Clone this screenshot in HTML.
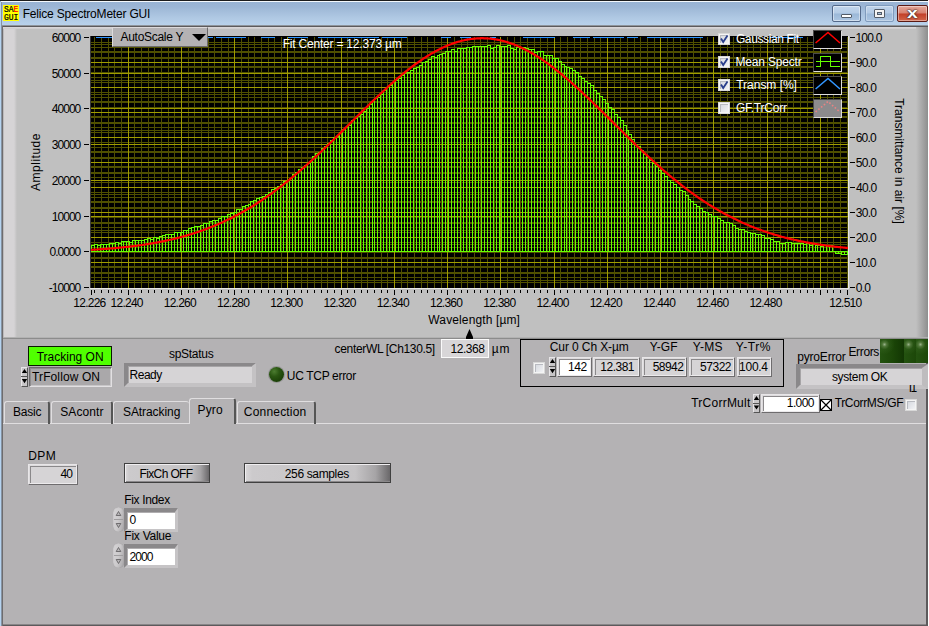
<!DOCTYPE html>
<html><head><meta charset="utf-8"><title>Felice SpectroMeter GUI</title>
<style>
html,body{margin:0;padding:0}
body{width:929px;height:626px;position:relative;overflow:hidden;background:#fff;font-family:"Liberation Sans",sans-serif;font-size:12px;color:#000}
.a{position:absolute}
.t{position:absolute;white-space:nowrap;line-height:14px;height:14px}
.w{color:#fff}
.r{text-align:right}
.c{text-align:center}
#title{left:0;top:0;width:928px;height:27px;background:linear-gradient(#97b2d3 0,#9cb6d5 25%,#afc8e3 65%,#bbd4ed 100%)}
#panel{left:3px;top:27px;width:923px;height:597px;background:#b4b2b4;border-bottom:1px solid #888688}
#graph{left:3px;top:27px;width:925px;height:312px;background:#c0c0c0}
.sunk{position:absolute;box-sizing:border-box;border:1px solid;border-color:#6e6c6e #e6e4e6 #e6e4e6 #6e6c6e;background:#d6d4d6}
.fld{position:absolute;box-sizing:border-box;border:1px solid;border-color:#e8e6e8 #6e6c6e #6e6c6e #e8e6e8;background:#d6d4d6;box-shadow:inset 1px 1px 0 #dddbdd,inset -1px -1px 0 #eceaec,inset 2px 2px 0 #8a888a}
.btn{position:absolute;box-sizing:border-box;border:1px solid;border-color:#e8e6e8 #4a484a #4a484a #e8e6e8;background:#c2c0c2;text-align:center;line-height:17px}
.cb{position:absolute;box-sizing:border-box;width:12px;height:12px;border:1px solid #d8d8d8;background:linear-gradient(135deg,#d0d3da,#f4f5f7);box-shadow:inset 0 0 0 1px #f4f4f4,inset 1px 1px 0 1px #b8bac0}
.tab{position:absolute;box-sizing:border-box;top:401px;height:23px;border-top:1px solid #e0dee0;border-left:1px solid #e0dee0;border-right:2px solid #555;border-radius:3px 3px 0 0;text-align:center;line-height:21px}
</style></head><body>
<!-- window chrome -->
<div class="a" id="title"></div>
<div class="a" style="left:0;top:0;width:929px;height:1px;background:#1c1c1c"></div>
<div class="a" style="left:1px;top:1px;width:927px;height:1px;background:#f4f8fc"></div>
<div class="a" style="left:0;top:2px;width:2px;height:624px;background:linear-gradient(90deg,#b5d3f0 0,#b5d3f0 1px,#8793a2 1px)"></div>
<div class="a" style="left:2px;top:25px;width:926px;height:601px;background:#5c5a5c"></div>
<div class="a" style="left:2px;top:25px;width:1px;height:601px;background:#6e6c6e"></div>
<div class="a" style="left:2px;top:25px;width:926px;height:1px;background:#8f959c"></div>
<div class="a" id="panel"></div>
<div class="a" style="left:928px;top:0;width:1px;height:626px;background:#fff"></div>
<!-- icon -->
<div class="a" style="left:3px;top:5px;width:16px;height:16px;background:#ff0"></div>
<div class="t" style="left:4px;top:5px;font:8px/8px 'Liberation Mono',monospace;height:8px;transform-origin:0 0;transform:scaleY(1.22);-webkit-text-stroke:.2px #000">SA<span style="color:#f00;-webkit-text-stroke:.2px #f00">E</span></div>
<div class="t" style="left:4px;top:13px;font:8px/8px 'Liberation Mono',monospace;height:8px;transform-origin:0 0;transform:scaleY(1.22);-webkit-text-stroke:.2px #000">GUI</div>
<div class="t" style="left:22.74px;top:7.00px;font-size:12px;letter-spacing:-0.203px;">Felice SpectroMeter GUI</div>
<!-- window buttons -->
<div class="a" style="left:832px;top:5px;width:29px;height:17px;box-sizing:border-box;border:1px solid #53698a;border-radius:2px;background:linear-gradient(#c3d6ec 0,#b4cbe5 48%,#9bb8d8 52%,#adc6e2 100%);box-shadow:inset 0 0 0 1px rgba(255,255,255,.45)"></div>
<div class="a" style="left:841px;top:13.5px;width:11px;height:4.5px;box-sizing:border-box;border:1px solid #535c68;border-radius:1px;background:#fff"></div>
<div class="a" style="left:865px;top:5px;width:29px;height:17px;box-sizing:border-box;border:1px solid #7f9bbd;border-radius:2px;background:linear-gradient(#c0d4eb 0,#b2c9e4 48%,#9cb9d9 52%,#abc4e1 100%);box-shadow:inset 0 0 0 1px rgba(255,255,255,.3)"></div>
<div class="a" style="left:874px;top:9px;width:11px;height:9px;box-sizing:border-box;border:1px solid #535c68;border-radius:1px;background:#f4f4f4"></div>
<div class="a" style="left:877px;top:12px;width:5px;height:3px;box-sizing:border-box;border:1px solid #535c68;background:#a9c1dd"></div>
<div class="a" style="left:897px;top:5px;width:31px;height:17px;box-sizing:border-box;border:1px solid #5b1a14;border-radius:2px;background:linear-gradient(#e5a99b 0,#d7806f 48%,#c23f28 52%,#d2664b 100%);box-shadow:inset 0 0 0 1px rgba(255,255,255,.4)"></div>
<div class="t w" style="left:897px;top:5px;width:31px;text-align:center;font:bold 15.5px/16px 'Liberation Sans',sans-serif;height:17px;transform:scaleX(1.25);text-shadow:0 0 1px #3c2c28,0 0 1px #3c2c28,0 0 2px #3c2c28">x</div>

<!-- graph panel -->
<div class="a" id="graph"></div>
<div class="a" style="left:3px;top:27px;width:14px;height:310px;background:linear-gradient(90deg,#bcbabc 0,#bcbabc 1px,#d6d4d6 1.5px,#d6d4d6 11px,#c0c0c0 14px)"></div>
<div class="a" style="left:3px;top:27px;width:917px;height:2px;background:linear-gradient(#dcdadc,#cccacc)"></div>
<div class="a" style="left:916px;top:27px;width:12px;height:312px;background:linear-gradient(90deg,#c0c0c0,#8e8e8e)"></div>
<div class="a" style="left:3px;top:337px;width:925px;height:1px;background:#b2b2b2"></div>
<div class="a" style="left:3px;top:338px;width:925px;height:1px;background:#8c8c8c"></div>

<svg class="a" style="left:0;top:0" width="929" height="340" shape-rendering="crispEdges">
<rect x="91" y="36" width="757" height="252" fill="#000"/><path d="M91 42.5H848M91 44.5H848M91 47.5H848M91 51.5H848M91 52.5H848M91 57.5H848M91 58.5H848M91 66.5H848M91 67.5H848M91 72.5H848M91 77.5H848M91 80.5H848M91 82.5H848M91 92.5H848M91 94.5H848M91 97.5H848M91 101.5H848M91 102.5H848M91 107.5H848M91 116.5H848M91 117.5H848M91 122.5H848M91 123.5H848M91 127.5H848M91 130.5H848M91 132.5H848M91 142.5H848M91 147.5H848M91 151.5H848M91 152.5H848M91 157.5H848M91 158.5H848M91 166.5H848M91 167.5H848M91 172.5H848M91 173.5H848M91 177.5H848M91 182.5H848M91 192.5H848M91 194.5H848M91 197.5H848M91 201.5H848M91 202.5H848M91 207.5H848M91 208.5H848M91 217.5H848M91 222.5H848M91 223.5H848M91 227.5H848M91 230.5H848M91 232.5H848M91 242.5H848M91 244.5H848M91 247.5H848M91 252.5H848M91 257.5H848M91 258.5H848M91 266.5H848M91 267.5H848M91 272.5H848M91 273.5H848M91 277.5H848M91 280.5H848M91 282.5H848M94.5 37V288M101.5 37V288M108.5 37V288M114.5 37V288M121.5 37V288M134.5 37V288M141.5 37V288M148.5 37V288M154.5 37V288M161.5 37V288M168.5 37V288M174.5 37V288M188.5 37V288M194.5 37V288M201.5 37V288M208.5 37V288M214.5 37V288M221.5 37V288M228.5 37V288M241.5 37V288M248.5 37V288M254.5 37V288M261.5 37V288M268.5 37V288M274.5 37V288M281.5 37V288M294.5 37V288M301.5 37V288M307.5 37V288M314.5 37V288M321.5 37V288M327.5 37V288M334.5 37V288M347.5 37V288M354.5 37V288M361.5 37V288M367.5 37V288M374.5 37V288M381.5 37V288M387.5 37V288M401.5 37V288M407.5 37V288M414.5 37V288M421.5 37V288M427.5 37V288M434.5 37V288M441.5 37V288M454.5 37V288M461.5 37V288M467.5 37V288M474.5 37V288M480.5 37V288M487.5 37V288M494.5 37V288M507.5 37V288M514.5 37V288M520.5 37V288M527.5 37V288M534.5 37V288M540.5 37V288M547.5 37V288M560.5 37V288M567.5 37V288M574.5 37V288M580.5 37V288M587.5 37V288M594.5 37V288M600.5 37V288M614.5 37V288M620.5 37V288M627.5 37V288M634.5 37V288M640.5 37V288M647.5 37V288M654.5 37V288M667.5 37V288M673.5 37V288M680.5 37V288M687.5 37V288M693.5 37V288M700.5 37V288M707.5 37V288M720.5 37V288M727.5 37V288M733.5 37V288M740.5 37V288M747.5 37V288M753.5 37V288M760.5 37V288M773.5 37V288M780.5 37V288M787.5 37V288M793.5 37V288M800.5 37V288M807.5 37V288M813.5 37V288M827.5 37V288M833.5 37V288M840.5 37V288M847.5 37V288" stroke="#505000" stroke-width="1" fill="none"/><path d="M91 62.5H848M91 73.5H848M91 87.5H848M91 108.5H848M91 112.5H848M91 137.5H848M91 144.5H848M91 162.5H848M91 180.5H848M91 187.5H848M91 212.5H848M91 216.5H848M91 237.5H848M91 251.5H848M91 262.5H848M128.5 37V288M181.5 37V288M234.5 37V288M287.5 37V288M341.5 37V288M394.5 37V288M447.5 37V288M500.5 37V288M554.5 37V288M607.5 37V288M660.5 37V288M713.5 37V288M767.5 37V288M820.5 37V288" stroke="#a09c00" stroke-width="1" fill="none"/><path d="M91.5 245V252M91 245.5H95M94.5 245V252M94.5 244V252M94 244.5H98M97.5 244V252M97.5 245V252M97 245.5H101M100.5 245V252M100.5 244V252M100 244.5H104M103.5 244V252M103.5 244V252M103 244.5H107M106.5 244V252M106.5 244V252M106 244.5H110M109.5 244V252M109.5 243V252M109 243.5H113M112.5 243V252M112.5 243V252M112 243.5H116M115.5 243V252M115.5 242V252M115 242.5H119M118.5 242V252M118.5 243V252M118 243.5H122M121.5 243V252M121.5 241V252M121 241.5H124M123.5 241V252M123.5 241V252M123 241.5H127M126.5 241V252M126.5 241V252M126 241.5H130M129.5 241V252M129.5 242V252M129 242.5H133M132.5 242V252M132.5 240V252M132 240.5H136M135.5 240V252M135.5 240V252M135 240.5H139M138.5 240V252M138.5 240V252M138 240.5H142M141.5 240V252M141.5 240V252M141 240.5H145M144.5 240V252M144.5 239V252M144 239.5H148M147.5 239V252M147.5 238V252M147 238.5H151M150.5 238V252M150.5 239V252M150 239.5H154M153.5 239V252M153.5 237V252M153 237.5H157M156.5 237V252M156.5 238V252M156 238.5H160M159.5 238V252M159.5 236V252M159 236.5H163M162.5 236V252M162.5 235V252M162 235.5H166M165.5 235V252M165.5 234V252M165 234.5H169M168.5 234V252M168.5 234V252M168 234.5H172M171.5 234V252M171.5 234V252M171 234.5H175M174.5 234V252M174.5 232V252M174 232.5H178M177.5 232V252M177.5 232V252M177 232.5H181M180.5 232V252M180.5 232V252M180 232.5H184M183.5 232V252M183.5 230V252M183 230.5H187M186.5 230V252M186.5 230V252M186 230.5H189M188.5 230V252M188.5 228V252M188 228.5H192M191.5 228V252M191.5 227V252M191 227.5H195M194.5 227V252M194.5 226V252M194 226.5H198M197.5 226V252M197.5 226V252M197 226.5H201M200.5 226V252M200.5 225V252M200 225.5H204M203.5 225V252M203.5 223V252M203 223.5H207M206.5 223V252M206.5 223V252M206 223.5H210M209.5 223V252M209.5 221V252M209 221.5H213M212.5 221V252M212.5 220V252M212 220.5H216M215.5 220V252M215.5 220V252M215 220.5H219M218.5 220V252M218.5 218V252M218 218.5H222M221.5 218V252M221.5 216V252M221 216.5H225M224.5 216V252M224.5 216V252M224 216.5H228M227.5 216V252M227.5 214V252M227 214.5H231M230.5 214V252M230.5 213V252M230 213.5H234M233.5 213V252M233.5 212V252M233 212.5H237M236.5 212V252M236.5 209V252M236 209.5H240M239.5 209V252M239.5 209V252M239 209.5H243M242.5 209V252M242.5 206V252M242 206.5H246M245.5 206V252M245.5 205V252M245 205.5H249M248.5 205V252M248.5 204V252M248 204.5H251M250.5 204V252M250.5 201V252M250 201.5H254M253.5 201V252M253.5 200V252M253 200.5H257M256.5 200V252M256.5 198V252M256 198.5H260M259.5 198V252M259.5 197V252M259 197.5H263M262.5 197V252M262.5 196V252M262 196.5H266M265.5 196V252M265.5 194V252M265 194.5H269M268.5 194V252M268.5 192V252M268 192.5H272M271.5 192V252M271.5 189V252M271 189.5H275M274.5 189V252M274.5 188V252M274 188.5H278M277.5 188V252M277.5 186V252M277 186.5H281M280.5 186V252M280.5 184V252M280 184.5H284M283.5 184V252M283.5 181V252M283 181.5H287M286.5 181V252M286.5 180V252M286 180.5H290M289.5 180V252M289.5 178V252M289 178.5H293M292.5 178V252M292.5 174V252M292 174.5H296M295.5 174V252M295.5 172V252M295 172.5H299M298.5 172V252M298.5 169V252M298 169.5H302M301.5 169V252M301.5 167V252M301 167.5H305M304.5 167V252M304.5 165V252M304 165.5H308M307.5 165V252M307.5 163V252M307 163.5H311M310.5 163V252M310.5 160V252M310 160.5H313M312.5 160V252M312.5 156V252M312 156.5H316M315.5 156V252M315.5 153V252M315 153.5H319M318.5 153V252M318.5 152V252M318 152.5H322M321.5 152V252M321.5 148V252M321 148.5H325M324.5 148V252M324.5 146V252M324 146.5H328M327.5 146V252M327.5 143V252M327 143.5H331M330.5 143V252M330.5 140V252M330 140.5H334M333.5 140V252M333.5 137V252M333 137.5H337M336.5 137V252M336.5 136V252M336 136.5H340M339.5 136V252M339.5 132V252M339 132.5H343M342.5 132V252M342.5 129V252M342 129.5H346M345.5 129V252M345.5 127V252M345 127.5H349M348.5 127V252M348.5 125V252M348 125.5H352M351.5 125V252M351.5 120V252M351 120.5H355M354.5 120V252M354.5 118V252M354 118.5H358M357.5 118V252M357.5 116V252M357 116.5H361M360.5 116V252M360.5 114V252M360 114.5H364M363.5 114V252M363.5 111V252M363 111.5H367M366.5 111V252M366.5 108V252M366 108.5H370M369.5 108V252M369.5 104V252M369 104.5H373M372.5 104V252M372.5 101V252M372 101.5H375M374.5 101V252M374.5 98V252M374 98.5H378M377.5 98V252M377.5 97V252M377 97.5H381M380.5 97V252M380.5 94V252M380 94.5H384M383.5 94V252M383.5 90V252M383 90.5H387M386.5 90V252M386.5 87V252M386 87.5H390M389.5 87V252M389.5 85V252M389 85.5H393M392.5 85V252M392.5 82V252M392 82.5H396M395.5 82V252M395.5 80V252M395 80.5H399M398.5 80V252M398.5 78V252M398 78.5H402M401.5 78V252M401.5 75V252M401 75.5H405M404.5 75V252M404.5 72V252M404 72.5H408M407.5 72V252M407.5 72V252M407 72.5H411M410.5 72V252M410.5 70V252M410 70.5H414M413.5 70V252M413.5 68V252M413 68.5H417M416.5 68V252M416.5 67V252M416 67.5H420M419.5 67V252M419.5 65V252M419 65.5H423M422.5 65V252M422.5 62V252M422 62.5H426M425.5 62V252M425.5 61V252M425 61.5H429M428.5 61V252M428.5 59V252M428 59.5H432M431.5 59V252M431.5 56V252M431 56.5H435M434.5 56V252M434.5 57V252M434 57.5H438M437.5 57V252M437.5 55V252M437 55.5H440M439.5 55V252M439.5 54V252M439 54.5H443M442.5 54V252M442.5 53V252M442 53.5H446M445.5 53V252M445.5 51V252M445 51.5H449M448.5 51V252M448.5 51V252M448 51.5H452M451.5 51V252M451.5 49V252M451 49.5H455M454.5 49V252M454.5 51V252M454 51.5H458M457.5 51V252M457.5 48V252M457 48.5H461M460.5 48V252M460.5 48V252M460 48.5H464M463.5 48V252M463.5 48V252M463 48.5H467M466.5 48V252M466.5 47V252M466 47.5H470M469.5 47V252M469.5 47V252M469 47.5H473M472.5 47V252M472.5 46V252M472 46.5H476M475.5 46V252M475.5 46V252M475 46.5H479M478.5 46V252M478.5 46V252M478 46.5H482M481.5 46V252M481.5 46V252M481 46.5H485M484.5 46V252M484.5 46V252M484 46.5H488M487.5 46V252M487.5 45V252M487 45.5H491M490.5 45V252M490.5 48V252M490 48.5H494M493.5 48V252M493.5 47V252M493 47.5H497M496.5 47V252M496.5 45V252M496 45.5H500M499.5 45V252M499.5 46V252M499 46.5H502M501.5 46V252M501.5 46V252M501 46.5H505M504.5 46V252M504.5 46V252M504 46.5H508M507.5 46V252M507.5 45V252M507 45.5H511M510.5 45V252M510.5 48V252M510 48.5H514M513.5 48V252M513.5 49V252M513 49.5H517M516.5 49V252M516.5 47V252M516 47.5H520M519.5 47V252M519.5 48V252M519 48.5H523M522.5 48V252M522.5 47V252M522 47.5H526M525.5 47V252M525.5 48V252M525 48.5H529M528.5 48V252M528.5 49V252M528 49.5H532M531.5 49V252M531.5 49V252M531 49.5H535M534.5 49V252M534.5 52V252M534 52.5H538M537.5 52V252M537.5 51V252M537 51.5H541M540.5 51V252M540.5 51V252M540 51.5H544M543.5 51V252M543.5 55V252M543 55.5H547M546.5 55V252M546.5 55V252M546 55.5H550M549.5 55V252M549.5 55V252M549 55.5H553M552.5 55V252M552.5 58V252M552 58.5H556M555.5 58V252M555.5 58V252M555 58.5H559M558.5 58V252M558.5 61V252M558 61.5H562M561.5 61V252M561.5 64V252M561 64.5H565M564.5 64V252M564.5 66V252M564 66.5H567M566.5 66V252M566.5 67V252M566 67.5H570M569.5 67V252M569.5 68V252M569 68.5H573M572.5 68V252M572.5 70V252M572 70.5H576M575.5 70V252M575.5 72V252M575 72.5H579M578.5 72V252M578.5 76V252M578 76.5H582M581.5 76V252M581.5 78V252M581 78.5H585M584.5 78V252M584.5 81V252M584 81.5H588M587.5 81V252M587.5 83V252M587 83.5H591M590.5 83V252M590.5 85V252M590 85.5H594M593.5 85V252M593.5 90V252M593 90.5H597M596.5 90V252M596.5 93V252M596 93.5H600M599.5 93V252M599.5 96V252M599 96.5H603M602.5 96V252M602.5 99V252M602 99.5H606M605.5 99V252M605.5 103V252M605 103.5H609M608.5 103V252M608.5 107V252M608 107.5H612M611.5 107V252M611.5 109V252M611 109.5H615M614.5 109V252M614.5 114V252M614 114.5H618M617.5 114V252M617.5 117V252M617 117.5H621M620.5 117V252M620.5 120V252M620 120.5H624M623.5 120V252M623.5 125V252M623 125.5H627M626.5 125V252M626.5 130V252M626 130.5H629M628.5 130V252M628.5 134V252M628 134.5H632M631.5 134V252M631.5 139V252M631 139.5H635M634.5 139V252M634.5 144V252M634 144.5H638M637.5 144V252M637.5 146V252M637 146.5H641M640.5 146V252M640.5 150V252M640 150.5H644M643.5 150V252M643.5 154V252M643 154.5H647M646.5 154V252M646.5 157V252M646 157.5H650M649.5 157V252M649.5 160V252M649 160.5H653M652.5 160V252M652.5 163V252M652 163.5H656M655.5 163V252M655.5 166V252M655 166.5H659M658.5 166V252M658.5 170V252M658 170.5H662M661.5 170V252M661.5 173V252M661 173.5H665M664.5 173V252M664.5 176V252M664 176.5H668M667.5 176V252M667.5 180V252M667 180.5H671M670.5 180V252M670.5 182V252M670 182.5H674M673.5 182V252M673.5 184V252M673 184.5H677M676.5 184V252M676.5 187V252M676 187.5H680M679.5 187V252M679.5 190V252M679 190.5H683M682.5 190V252M682.5 191V252M682 191.5H686M685.5 191V252M685.5 195V252M685 195.5H689M688.5 195V252M688.5 199V252M688 199.5H691M690.5 199V252M690.5 201V252M690 201.5H694M693.5 201V252M693.5 204V252M693 204.5H697M696.5 204V252M696.5 206V252M696 206.5H700M699.5 206V252M699.5 208V252M699 208.5H703M702.5 208V252M702.5 211V252M702 211.5H706M705.5 211V252M705.5 212V252M705 212.5H709M708.5 212V252M708.5 214V252M708 214.5H712M711.5 214V252M711.5 216V252M711 216.5H715M714.5 216V252M714.5 216V252M714 216.5H718M717.5 216V252M717.5 218V252M717 218.5H721M720.5 218V252M720.5 220V252M720 220.5H724M723.5 220V252M723.5 222V252M723 222.5H727M726.5 222V252M726.5 222V252M726 222.5H730M729.5 222V252M729.5 223V252M729 223.5H733M732.5 223V252M732.5 225V252M732 225.5H736M735.5 225V252M735.5 228V252M735 228.5H739M738.5 228V252M738.5 229V252M738 229.5H742M741.5 229V252M741.5 229V252M741 229.5H745M744.5 229V252M744.5 231V252M744 231.5H748M747.5 231V252M747.5 232V252M747 232.5H751M750.5 232V252M750.5 233V252M750 233.5H753M752.5 233V252M752.5 233V252M752 233.5H756M755.5 233V252M755.5 234V252M755 234.5H759M758.5 234V252M758.5 234V252M758 234.5H762M761.5 234V252M761.5 235V252M761 235.5H765M764.5 235V252M764.5 238V252M764 238.5H768M767.5 238V252M767.5 238V252M767 238.5H771M770.5 238V252M770.5 239V252M770 239.5H774M773.5 239V252M773.5 241V252M773 241.5H777M776.5 241V252M776.5 241V252M776 241.5H780M779.5 241V252M779.5 243V252M779 243.5H783M782.5 243V252M782.5 243V252M782 243.5H786M785.5 243V252M785.5 242V252M785 242.5H789M788.5 242V252M788.5 242V252M788 242.5H792M791.5 242V252M791.5 243V252M791 243.5H795M794.5 243V252M794.5 243V252M794 243.5H798M797.5 243V252M797.5 243V252M797 243.5H801M800.5 243V252M800.5 243V252M800 243.5H804M803.5 243V252M803.5 244V252M803 244.5H807M806.5 244V252M806.5 243V252M806 243.5H810M809.5 243V252M809.5 245V252M809 245.5H813M812.5 245V252M812.5 244V252M812 244.5H816M815.5 244V252M815.5 245V252M815 245.5H818M817.5 245V252M817.5 245V252M817 245.5H821M820.5 245V252M820.5 246V252M820 246.5H824M823.5 246V252M823.5 245V252M823 245.5H827M826.5 245V252M826.5 246V252M826 246.5H830M829.5 246V252M829.5 245V252M829 245.5H833M832.5 245V252M832.5 251V252M832 251.5H836M835.5 251V252M835.5 251V254M835 253.5H839M838.5 251V254M838.5 251V254M838 253.5H842M841.5 251V254M841.5 251V255M841 254.5H845M844.5 251V255M844.5 251V255M844 254.5H848M847.5 251V255M91 251.5H848" stroke="#64ff00" stroke-width="1" fill="none"/><path d="M96 37.5H112M208 37.5H213M216 37.5H246M261 37.5H275M288 37.5H308M318 37.5H379M382 37.5H407M441 37.5H451M460 37.5H471M490 37.5H496M523 37.5H555M573 37.5H590M593 37.5H624M627 37.5H638M647 37.5H703M770 37.5H803" stroke="#3296ff" stroke-width="1" fill="none"/><polyline points="91,249.9 92,249.8 93,249.7 94,249.7 95,249.6 96,249.6 97,249.5 98,249.4 99,249.4 100,249.3 101,249.2 102,249.2 103,249.1 104,249.0 105,248.9 106,248.9 107,248.8 108,248.7 109,248.6 110,248.5 111,248.5 112,248.4 113,248.3 114,248.2 115,248.1 116,248.0 117,247.9 118,247.8 119,247.7 120,247.6 121,247.5 122,247.4 123,247.3 124,247.2 125,247.1 126,247.0 127,246.9 128,246.8 129,246.7 130,246.5 131,246.4 132,246.3 133,246.2 134,246.1 135,245.9 136,245.8 137,245.7 138,245.5 139,245.4 140,245.2 141,245.1 142,245.0 143,244.8 144,244.7 145,244.5 146,244.4 147,244.2 148,244.0 149,243.9 150,243.7 151,243.5 152,243.4 153,243.2 154,243.0 155,242.8 156,242.7 157,242.5 158,242.3 159,242.1 160,241.9 161,241.7 162,241.5 163,241.3 164,241.1 165,240.9 166,240.7 167,240.4 168,240.2 169,240.0 170,239.8 171,239.5 172,239.3 173,239.1 174,238.8 175,238.6 176,238.3 177,238.1 178,237.8 179,237.6 180,237.3 181,237.0 182,236.8 183,236.5 184,236.2 185,235.9 186,235.7 187,235.4 188,235.1 189,234.8 190,234.5 191,234.2 192,233.9 193,233.5 194,233.2 195,232.9 196,232.6 197,232.2 198,231.9 199,231.6 200,231.2 201,230.9 202,230.5 203,230.2 204,229.8 205,229.4 206,229.1 207,228.7 208,228.3 209,227.9 210,227.5 211,227.1 212,226.7 213,226.3 214,225.9 215,225.5 216,225.1 217,224.7 218,224.2 219,223.8 220,223.3 221,222.9 222,222.5 223,222.0 224,221.5 225,221.1 226,220.6 227,220.1 228,219.6 229,219.2 230,218.7 231,218.2 232,217.7 233,217.2 234,216.6 235,216.1 236,215.6 237,215.1 238,214.5 239,214.0 240,213.5 241,212.9 242,212.3 243,211.8 244,211.2 245,210.6 246,210.1 247,209.5 248,208.9 249,208.3 250,207.7 251,207.1 252,206.5 253,205.9 254,205.2 255,204.6 256,204.0 257,203.3 258,202.7 259,202.0 260,201.4 261,200.7 262,200.1 263,199.4 264,198.7 265,198.0 266,197.3 267,196.6 268,195.9 269,195.2 270,194.5 271,193.8 272,193.1 273,192.4 274,191.6 275,190.9 276,190.1 277,189.4 278,188.6 279,187.9 280,187.1 281,186.3 282,185.6 283,184.8 284,184.0 285,183.2 286,182.4 287,181.6 288,180.8 289,180.0 290,179.2 291,178.4 292,177.5 293,176.7 294,175.9 295,175.0 296,174.2 297,173.3 298,172.5 299,171.6 300,170.8 301,169.9 302,169.0 303,168.2 304,167.3 305,166.4 306,165.5 307,164.6 308,163.7 309,162.8 310,161.9 311,161.0 312,160.1 313,159.2 314,158.3 315,157.3 316,156.4 317,155.5 318,154.5 319,153.6 320,152.7 321,151.7 322,150.8 323,149.8 324,148.9 325,147.9 326,147.0 327,146.0 328,145.1 329,144.1 330,143.1 331,142.2 332,141.2 333,140.2 334,139.2 335,138.3 336,137.3 337,136.3 338,135.3 339,134.3 340,133.4 341,132.4 342,131.4 343,130.4 344,129.4 345,128.4 346,127.4 347,126.4 348,125.5 349,124.5 350,123.5 351,122.5 352,121.5 353,120.5 354,119.5 355,118.5 356,117.5 357,116.5 358,115.6 359,114.6 360,113.6 361,112.6 362,111.6 363,110.6 364,109.6 365,108.7 366,107.7 367,106.7 368,105.7 369,104.8 370,103.8 371,102.8 372,101.9 373,100.9 374,99.9 375,99.0 376,98.0 377,97.1 378,96.1 379,95.2 380,94.2 381,93.3 382,92.4 383,91.4 384,90.5 385,89.6 386,88.7 387,87.8 388,86.8 389,85.9 390,85.0 391,84.2 392,83.3 393,82.4 394,81.5 395,80.6 396,79.8 397,78.9 398,78.0 399,77.2 400,76.3 401,75.5 402,74.7 403,73.9 404,73.0 405,72.2 406,71.4 407,70.6 408,69.8 409,69.0 410,68.3 411,67.5 412,66.7 413,66.0 414,65.2 415,64.5 416,63.8 417,63.1 418,62.3 419,61.6 420,60.9 421,60.3 422,59.6 423,58.9 424,58.2 425,57.6 426,57.0 427,56.3 428,55.7 429,55.1 430,54.5 431,53.9 432,53.3 433,52.7 434,52.2 435,51.6 436,51.1 437,50.5 438,50.0 439,49.5 440,49.0 441,48.5 442,48.0 443,47.5 444,47.1 445,46.6 446,46.2 447,45.8 448,45.3 449,44.9 450,44.5 451,44.2 452,43.8 453,43.4 454,43.1 455,42.8 456,42.4 457,42.1 458,41.8 459,41.5 460,41.3 461,41.0 462,40.7 463,40.5 464,40.3 465,40.0 466,39.8 467,39.6 468,39.5 469,39.3 470,39.1 471,39.0 472,38.9 473,38.8 474,38.6 475,38.6 476,38.5 477,38.4 478,38.3 479,38.3 480,38.3 481,38.2 482,38.2 483,38.2 484,38.3 485,38.3 486,38.3 487,38.4 488,38.5 489,38.5 490,38.6 491,38.7 492,38.9 493,39.0 494,39.1 495,39.3 496,39.5 497,39.6 498,39.8 499,40.0 500,40.2 501,40.5 502,40.7 503,41.0 504,41.2 505,41.5 506,41.8 507,42.1 508,42.4 509,42.7 510,43.1 511,43.4 512,43.8 513,44.1 514,44.5 515,44.9 516,45.3 517,45.7 518,46.2 519,46.6 520,47.0 521,47.5 522,48.0 523,48.4 524,48.9 525,49.4 526,50.0 527,50.5 528,51.0 529,51.6 530,52.1 531,52.7 532,53.2 533,53.8 534,54.4 535,55.0 536,55.6 537,56.3 538,56.9 539,57.5 540,58.2 541,58.8 542,59.5 543,60.2 544,60.9 545,61.6 546,62.3 547,63.0 548,63.7 549,64.4 550,65.2 551,65.9 552,66.7 553,67.4 554,68.2 555,69.0 556,69.8 557,70.6 558,71.3 559,72.2 560,73.0 561,73.8 562,74.6 563,75.4 564,76.3 565,77.1 566,78.0 567,78.8 568,79.7 569,80.5 570,81.4 571,82.3 572,83.2 573,84.1 574,85.0 575,85.9 576,86.8 577,87.7 578,88.6 579,89.5 580,90.4 581,91.4 582,92.3 583,93.2 584,94.2 585,95.1 586,96.0 587,97.0 588,97.9 589,98.9 590,99.9 591,100.8 592,101.8 593,102.7 594,103.7 595,104.7 596,105.6 597,106.6 598,107.6 599,108.6 600,109.6 601,110.5 602,111.5 603,112.5 604,113.5 605,114.5 606,115.5 607,116.5 608,117.4 609,118.4 610,119.4 611,120.4 612,121.4 613,122.4 614,123.4 615,124.4 616,125.4 617,126.4 618,127.3 619,128.3 620,129.3 621,130.3 622,131.3 623,132.3 624,133.3 625,134.3 626,135.2 627,136.2 628,137.2 629,138.2 630,139.2 631,140.1 632,141.1 633,142.1 634,143.0 635,144.0 636,145.0 637,145.9 638,146.9 639,147.8 640,148.8 641,149.7 642,150.7 643,151.6 644,152.6 645,153.5 646,154.5 647,155.4 648,156.3 649,157.2 650,158.2 651,159.1 652,160.0 653,160.9 654,161.8 655,162.7 656,163.6 657,164.5 658,165.4 659,166.3 660,167.2 661,168.1 662,169.0 663,169.8 664,170.7 665,171.6 666,172.4 667,173.3 668,174.1 669,175.0 670,175.8 671,176.6 672,177.5 673,178.3 674,179.1 675,179.9 676,180.7 677,181.5 678,182.3 679,183.1 680,183.9 681,184.7 682,185.5 683,186.3 684,187.0 685,187.8 686,188.6 687,189.3 688,190.1 689,190.8 690,191.6 691,192.3 692,193.0 693,193.7 694,194.5 695,195.2 696,195.9 697,196.6 698,197.3 699,198.0 700,198.7 701,199.3 702,200.0 703,200.7 704,201.3 705,202.0 706,202.6 707,203.3 708,203.9 709,204.6 710,205.2 711,205.8 712,206.4 713,207.0 714,207.6 715,208.2 716,208.8 717,209.4 718,210.0 719,210.6 720,211.2 721,211.7 722,212.3 723,212.9 724,213.4 725,214.0 726,214.5 727,215.0 728,215.6 729,216.1 730,216.6 731,217.1 732,217.6 733,218.1 734,218.6 735,219.1 736,219.6 737,220.1 738,220.6 739,221.0 740,221.5 741,222.0 742,222.4 743,222.9 744,223.3 745,223.8 746,224.2 747,224.6 748,225.0 749,225.5 750,225.9 751,226.3 752,226.7 753,227.1 754,227.5 755,227.9 756,228.3 757,228.7 758,229.0 759,229.4 760,229.8 761,230.1 762,230.5 763,230.8 764,231.2 765,231.5 766,231.9 767,232.2 768,232.5 769,232.9 770,233.2 771,233.5 772,233.8 773,234.1 774,234.4 775,234.8 776,235.0 777,235.3 778,235.6 779,235.9 780,236.2 781,236.5 782,236.8 783,237.0 784,237.3 785,237.6 786,237.8 787,238.1 788,238.3 789,238.6 790,238.8 791,239.1 792,239.3 793,239.5 794,239.8 795,240.0 796,240.2 797,240.4 798,240.6 799,240.9 800,241.1 801,241.3 802,241.5 803,241.7 804,241.9 805,242.1 806,242.3 807,242.5 808,242.6 809,242.8 810,243.0 811,243.2 812,243.4 813,243.5 814,243.7 815,243.9 816,244.0 817,244.2 818,244.3 819,244.5 820,244.6 821,244.8 822,244.9 823,245.1 824,245.2 825,245.4 826,245.5 827,245.7 828,245.8 829,245.9 830,246.0 831,246.2 832,246.3 833,246.4 834,246.5 835,246.7 836,246.8 837,246.9 838,247.0 839,247.1 840,247.2 841,247.3 842,247.4 843,247.5 844,247.6 845,247.7 846,247.8 847,247.9 848,248.0" fill="none" stroke="#f00" stroke-width="2.2" shape-rendering="geometricPrecision" stroke-linejoin="round"/><path d="M90.5 36V288" stroke="#3a3a3a" stroke-width="1"/><path d="M90 288.5H849M848.5 36V289" stroke="#e6e6e6" stroke-width="1" fill="none"/>
<path d="M84 287.5H89M84 251.5H89M84 216.5H89M84 180.5H89M84 144.5H89M84 108.5H89M84 73.5H89M84 37.5H89M850 287.5H855M850 262.5H855M850 237.5H855M850 212.5H855M850 187.5H855M850 162.5H855M850 137.5H855M850 112.5H855M850 87.5H855M850 62.5H855M850 37.5H855M94.5 290V293M101.5 290V293M108.5 290V293M114.5 290V293M121.5 290V293M134.5 290V293M141.5 290V293M148.5 290V293M154.5 290V293M161.5 290V293M168.5 290V293M174.5 290V293M188.5 290V293M194.5 290V293M201.5 290V293M208.5 290V293M214.5 290V293M221.5 290V293M228.5 290V293M241.5 290V293M248.5 290V293M254.5 290V293M261.5 290V293M268.5 290V293M274.5 290V293M281.5 290V293M294.5 290V293M301.5 290V293M307.5 290V293M314.5 290V293M321.5 290V293M327.5 290V293M334.5 290V293M347.5 290V293M354.5 290V293M361.5 290V293M367.5 290V293M374.5 290V293M381.5 290V293M387.5 290V293M401.5 290V293M407.5 290V293M414.5 290V293M421.5 290V293M427.5 290V293M434.5 290V293M441.5 290V293M454.5 290V293M461.5 290V293M467.5 290V293M474.5 290V293M480.5 290V293M487.5 290V293M494.5 290V293M507.5 290V293M514.5 290V293M520.5 290V293M527.5 290V293M534.5 290V293M540.5 290V293M547.5 290V293M560.5 290V293M567.5 290V293M574.5 290V293M580.5 290V293M587.5 290V293M594.5 290V293M600.5 290V293M614.5 290V293M620.5 290V293M627.5 290V293M634.5 290V293M640.5 290V293M647.5 290V293M654.5 290V293M667.5 290V293M673.5 290V293M680.5 290V293M687.5 290V293M693.5 290V293M700.5 290V293M707.5 290V293M720.5 290V293M727.5 290V293M733.5 290V293M740.5 290V293M747.5 290V293M753.5 290V293M760.5 290V293M773.5 290V293M780.5 290V293M787.5 290V293M793.5 290V293M800.5 290V293M807.5 290V293M813.5 290V293M827.5 290V293M833.5 290V293M840.5 290V293M847.5 290V293M128.5 290V295M181.5 290V295M234.5 290V295M287.5 290V295M341.5 290V295M394.5 290V295M447.5 290V295M500.5 290V295M554.5 290V295M607.5 290V295M660.5 290V295M713.5 290V295M767.5 290V295M820.5 290V295M91.5 290V295M847.5 290V295" stroke="#000" stroke-width="1" fill="none"/>
</svg>
<div class="t" style="left:48.84px;top:281.00px;font-size:12px;letter-spacing:-1.000px;">-10000</div>
<div class="t" style="left:49.50px;top:245.00px;font-size:12px;letter-spacing:-1.000px;">0.0000</div>
<div class="t" style="left:51.86px;top:210.00px;font-size:12px;letter-spacing:-1.000px;">10000</div>
<div class="t" style="left:51.86px;top:174.00px;font-size:12px;letter-spacing:-1.000px;">20000</div>
<div class="t" style="left:51.86px;top:138.00px;font-size:12px;letter-spacing:-1.000px;">30000</div>
<div class="t" style="left:51.86px;top:102.00px;font-size:12px;letter-spacing:-1.000px;">40000</div>
<div class="t" style="left:51.86px;top:67.00px;font-size:12px;letter-spacing:-1.000px;">50000</div>
<div class="t" style="left:51.86px;top:31.00px;font-size:12px;letter-spacing:-1.000px;">60000</div>
<div class="t" style="left:855.82px;top:281.00px;font-size:12px;letter-spacing:-0.750px;">0.0</div>
<div class="t" style="left:855.40px;top:256.00px;font-size:12px;letter-spacing:-0.750px;">10.0</div>
<div class="t" style="left:855.70px;top:231.00px;font-size:12px;letter-spacing:-0.750px;">20.0</div>
<div class="t" style="left:855.82px;top:206.00px;font-size:12px;letter-spacing:-0.750px;">30.0</div>
<div class="t" style="left:856.06px;top:181.00px;font-size:12px;letter-spacing:-0.750px;">40.0</div>
<div class="t" style="left:855.82px;top:156.00px;font-size:12px;letter-spacing:-0.750px;">50.0</div>
<div class="t" style="left:855.70px;top:131.00px;font-size:12px;letter-spacing:-0.750px;">60.0</div>
<div class="t" style="left:855.70px;top:106.00px;font-size:12px;letter-spacing:-0.750px;">70.0</div>
<div class="t" style="left:855.82px;top:81.00px;font-size:12px;letter-spacing:-0.750px;">80.0</div>
<div class="t" style="left:855.76px;top:56.00px;font-size:12px;letter-spacing:-0.750px;">90.0</div>
<div class="t" style="left:855.40px;top:31.00px;font-size:12px;letter-spacing:-0.750px;">100.0</div>
<div class="t" style="left:73.30px;top:296.00px;font-size:12px;letter-spacing:-0.750px;">12.226</div>
<div class="t" style="left:110.54px;top:296.00px;font-size:12px;letter-spacing:-0.750px;">12.240</div>
<div class="t" style="left:163.78px;top:296.00px;font-size:12px;letter-spacing:-0.750px;">12.260</div>
<div class="t" style="left:217.02px;top:296.00px;font-size:12px;letter-spacing:-0.750px;">12.280</div>
<div class="t" style="left:270.26px;top:296.00px;font-size:12px;letter-spacing:-0.750px;">12.300</div>
<div class="t" style="left:323.50px;top:296.00px;font-size:12px;letter-spacing:-0.750px;">12.320</div>
<div class="t" style="left:376.74px;top:296.00px;font-size:12px;letter-spacing:-0.750px;">12.340</div>
<div class="t" style="left:429.98px;top:296.00px;font-size:12px;letter-spacing:-0.750px;">12.360</div>
<div class="t" style="left:483.22px;top:296.00px;font-size:12px;letter-spacing:-0.750px;">12.380</div>
<div class="t" style="left:536.46px;top:296.00px;font-size:12px;letter-spacing:-0.750px;">12.400</div>
<div class="t" style="left:589.70px;top:296.00px;font-size:12px;letter-spacing:-0.750px;">12.420</div>
<div class="t" style="left:642.94px;top:296.00px;font-size:12px;letter-spacing:-0.750px;">12.440</div>
<div class="t" style="left:696.18px;top:296.00px;font-size:12px;letter-spacing:-0.750px;">12.460</div>
<div class="t" style="left:749.42px;top:296.00px;font-size:12px;letter-spacing:-0.750px;">12.480</div>
<div class="t" style="left:829.27px;top:296.00px;font-size:12px;letter-spacing:-0.750px;">12.510</div>
<div class="t" style="left:428.34px;top:313.00px;font-size:12px;letter-spacing:0.123px;">Wavelength [µm]</div>
<div class="a" style="left:36px;top:161.5px;width:0;height:0"><div class="t c" style="left:-50px;top:-7px;width:100px;transform:rotate(-90deg);font-size:12px;letter-spacing:0.5px">Amplitude</div></div>
<div class="a" style="left:899px;top:161px;width:0;height:0"><div class="t c" style="left:-80px;top:-7px;width:160px;transform:rotate(90deg);font-size:12px">Transmittance in air [%]</div></div>

<!-- autoscale button -->
<div class="a" style="left:112px;top:27px;width:96px;height:20px;box-sizing:border-box;background:#b4b2b4;border:1px solid;border-color:#dcdadc #6c6a6c #6c6a6c #dcdadc"></div>
<svg class="a" style="left:192px;top:34px" width="14" height="8"><path d="M0 0H14L7 7z" fill="#000"/></svg>

<!-- legend -->
<div class="cb" style="left:718px;top:33px"><svg class="a" style="left:0px;top:0px" width="10" height="10"><path d="M2 4.5L4.2 8L8.5 1.5" stroke="#2a3f8c" stroke-width="1.8" fill="none"/></svg></div>
<div class="t" style="left:735.90px;top:32.00px;font-size:12px;letter-spacing:-0.369px;color:#fff;">Gaussian Fit</div>
<div class="a" style="left:813px;top:30px;width:29px;height:19px;box-sizing:border-box;border:1px solid;border-color:#4a4a4a #dcdcdc #dcdcdc #4a4a4a;background:#000"></div>
<div class="cb" style="left:718px;top:56px"><svg class="a" style="left:0px;top:0px" width="10" height="10"><path d="M2 4.5L4.2 8L8.5 1.5" stroke="#2a3f8c" stroke-width="1.8" fill="none"/></svg></div>
<div class="t" style="left:735.54px;top:55.00px;font-size:12px;letter-spacing:-0.180px;color:#fff;">Mean Spectr</div>
<div class="a" style="left:813px;top:53px;width:29px;height:19px;box-sizing:border-box;border:1px solid;border-color:#4a4a4a #dcdcdc #dcdcdc #4a4a4a;background:#000"></div>
<div class="cb" style="left:718px;top:79px"><svg class="a" style="left:0px;top:0px" width="10" height="10"><path d="M2 4.5L4.2 8L8.5 1.5" stroke="#2a3f8c" stroke-width="1.8" fill="none"/></svg></div>
<div class="t" style="left:736.26px;top:78.00px;font-size:12px;letter-spacing:-0.024px;color:#fff;">Transm [%]</div>
<div class="a" style="left:813px;top:76px;width:29px;height:19px;box-sizing:border-box;border:1px solid;border-color:#4a4a4a #dcdcdc #dcdcdc #4a4a4a;background:#000"></div>
<div class="cb" style="left:718px;top:102px"></div>
<div class="t" style="left:735.90px;top:101.00px;font-size:12px;letter-spacing:-0.230px;color:#fff;">GF.TrCorr</div>
<div class="a" style="left:813px;top:99px;width:29px;height:19px;box-sizing:border-box;border:1px solid;border-color:#4a4a4a #dcdcdc #dcdcdc #4a4a4a;background:#8c8a8c"></div>
<svg class="a" style="left:813px;top:30px" width="29" height="90" shape-rendering="crispEdges"><path d="M2.6 13L15 2.5L27 13" stroke="#f00" stroke-width="1.5" fill="none" shape-rendering="auto"/><path d="M3 31.5H27M3 36.5H7.5V26.5H17.5V36.5H27" stroke="#64ff00" stroke-width="1" fill="none"/><path d="M2.6 59L15 48.5L27 59" stroke="#3296ff" stroke-width="1.5" fill="none" shape-rendering="auto"/><path d="M2.6 82L15 71.5L27 82" stroke="#e88484" stroke-width="1.6" stroke-dasharray="1.6 2" fill="none" shape-rendering="auto"/></svg>

<!-- lower controls -->
<div class="a" style="left:28px;top:346px;width:84px;height:20px;box-sizing:border-box;border:1px solid #0a1a00;background:#50ff00"></div>
<div class="a" style="left:21px;top:367px;width:7px;height:20px;box-sizing:border-box;border:1px solid;border-color:#e8e6e8 #555 #555 #e8e6e8;background:#c8c6c8"></div>
<div class="a" style="left:21px;top:376px;width:7px;height:1px;background:#555"></div>
<svg class="a" style="left:21px;top:367px" width="7" height="20"><path d="M3.5 2L6.2 6H0.8zM3.5 16.2L6.2 12H0.8z" fill="#000"/></svg>
<div class="a" style="left:29px;top:367px;width:83px;height:20px;box-sizing:border-box;background:#aaa8aa;border:1px solid;border-color:#6c6a6c #e2e0e2 #e2e0e2 #6c6a6c;box-shadow:inset 1px 1px 0 #8e8c8e,inset -1px -1px 0 #c8c6c8"></div>
<div class="a" style="left:124px;top:363px;width:132px;height:24px;box-sizing:border-box;border:4px solid;border-top-width:3px;border-color:#8a888a #c4c2c4 #c4c2c4 #8a888a;background:#d6d4d6;box-shadow:inset 1px 1px 0 #a6a4a6"></div>
<div class="a" style="left:269px;top:367px;width:15px;height:15px;border-radius:50%;background:radial-gradient(circle at 35% 30%,#4c7c30 0,#2a5612 35%,#1c4208 70%,#143404 100%);box-shadow:0 0 0 1px rgba(120,120,120,.5)"></div>
<div class="a" style="left:441px;top:339px;width:48px;height:19px;box-sizing:border-box;border:1px solid #fafafa;background:#d8d6d8"></div>
<svg class="a" style="left:465px;top:328px" width="10" height="12"><path d="M4.5 1L8 9V11H1V9z" fill="#000"/></svg>

<!-- cursor box -->
<div class="a" style="left:520px;top:339px;width:264px;height:48px;box-sizing:border-box;border:1px solid #000"></div>
<div class="cb" style="left:533px;top:362px"></div>
<div class="a" style="left:549px;top:357px;width:7px;height:20px;box-sizing:border-box;border:1px solid;border-color:#e8e6e8 #555 #555 #e8e6e8;background:#c8c6c8"></div>
<div class="a" style="left:549px;top:366px;width:7px;height:1px;background:#555"></div>
<svg class="a" style="left:549px;top:357px" width="7" height="20"><path d="M3.5 2L6.2 6H0.8zM3.5 16.2L6.2 12H0.8z" fill="#000"/></svg>
<div class="fld" style="left:557px;top:357px;width:35px;height:20px;background:#fff"></div>
<div class="fld" style="left:593px;top:357px;width:47px;height:20px"></div>
<div class="fld" style="left:642px;top:357px;width:45px;height:20px"></div>
<div class="fld" style="left:689px;top:357px;width:46px;height:20px"></div>
<div class="fld" style="left:737px;top:357px;width:35px;height:20px"></div>

<!-- right block -->
<div class="a" style="left:880px;top:339px;width:48px;height:24px;overflow:hidden;background:#1d4a0a">
 <div class="a" style="left:0px;top:0;width:24px;height:24px;background:radial-gradient(circle 10px at 4.5px 5.5px,rgba(200,218,186,.7) 0,rgba(140,172,115,.42) 22%,rgba(75,120,52,.2) 50%,rgba(40,90,20,0) 100%),linear-gradient(90deg,#245210 0,#1c4708 12px,#123603 24px)"></div>
 <div class="a" style="left:24px;top:0;width:12px;height:24px;background:radial-gradient(circle 10px at 4.5px 5.5px,rgba(200,218,186,.7) 0,rgba(140,172,115,.42) 22%,rgba(75,120,52,.2) 50%,rgba(40,90,20,0) 100%),linear-gradient(90deg,#245210 0,#1c4708 12px,#123603 24px)"></div>
 <div class="a" style="left:36px;top:0;width:12px;height:24px;background:radial-gradient(circle 10px at 4.5px 5.5px,rgba(200,218,186,.7) 0,rgba(140,172,115,.42) 22%,rgba(75,120,52,.2) 50%,rgba(40,90,20,0) 100%),linear-gradient(90deg,#245210 0,#1c4708 12px,#123603 24px)"></div>
</div>
<div class="a" style="left:796px;top:364px;width:132px;height:25px;box-sizing:border-box;border:4px solid;border-right-width:6px;border-color:#8a888a #bebcbe #c4c2c4 #8a888a;background:#d6d4d6;box-shadow:inset 1px 1px 0 #a6a4a6"></div>
<div class="t" style="left:831.90px;top:370.00px;font-size:12px;letter-spacing:-0.345px;">system OK</div>
<div class="a" style="left:900px;top:385px;width:25px;height:8px;overflow:hidden"><div class="t" style="left:6.76px;top:-4.50px;font-size:12px;letter-spacing:-3.600px;">T1</div></div>
<div class="a" style="left:753px;top:394px;width:7px;height:19px;box-sizing:border-box;border:1px solid;border-color:#e8e6e8 #555 #555 #e8e6e8;background:#c8c6c8"></div>
<div class="a" style="left:753px;top:403px;width:7px;height:1px;background:#555"></div>
<svg class="a" style="left:753px;top:394px" width="7" height="19"><path d="M3.5 2L6.2 6H0.8zM3.5 15.5L6.2 11.5H0.8z" fill="#000"/></svg>
<div class="fld" style="left:761px;top:394px;width:59px;height:19px;background:#fff"></div>
<svg class="a" style="left:820px;top:399px" width="12" height="12"><rect x=".5" y=".5" width="11" height="11" fill="#fff" stroke="#000"/><path d="M1 1L11 11M11 1L1 11" stroke="#000" stroke-width="1.2"/></svg>
<div class="cb" style="left:905px;top:399px"></div>

<!-- tabs -->
<div class="a" style="left:3px;top:423px;width:923px;height:1px;background:#e0dee0"></div>
<div class="tab" style="left:4px;width:46px"></div>
<div class="tab" style="left:51px;width:62px"></div>
<div class="tab" style="left:113px;width:76px;border-right:0"></div>
<div class="tab" style="left:237px;width:79px"></div>
<div class="tab" style="left:189px;width:47px;top:398px;height:26px;background:#b4b2b4;line-height:22px"></div>

<!-- tab content -->
<div class="fld" style="left:28px;top:464px;width:50px;height:21px"></div>
<div class="a" style="left:124px;top:463px;width:86px;height:20px;box-sizing:border-box;border:1px solid #404040;background:linear-gradient(90deg,#dad8da 0,#cccacc 5%,#c6c4c6 76%,#a6a4a6 90%,#6a686a 100%);box-shadow:inset 1px 1px 0 #f0eef0,inset 0 -1px 0 #8a888a"></div>
<div class="a" style="left:244px;top:463px;width:147px;height:20px;box-sizing:border-box;border:1px solid #404040;background:linear-gradient(90deg,#dad8da 0,#cccacc 5%,#c6c4c6 76%,#a6a4a6 90%,#6a686a 100%);box-shadow:inset 1px 1px 0 #f0eef0,inset 0 -1px 0 #8a888a"></div>
<div class="a" style="left:124px;top:508px;width:54px;height:24px;box-sizing:border-box;background:#fff;border:3px solid;border-top-width:4px;border-color:#8a888a #c6c4c6 #c6c4c6 #8a888a;box-shadow:inset 1px 1px 0 #b0aeb0"></div><div class="a" style="left:113px;top:507px;width:11px;height:25px;box-sizing:border-box;border-radius:5.5px;background:linear-gradient(100deg,#d6d4d6 0,#cccacc 50%,#a6a4a6 100%);box-shadow:inset 0 0 1px 0 #8a888a"></div><div class="a" style="left:114px;top:519px;width:9px;height:1px;background:#a09ea0"></div><svg class="a" style="left:113px;top:507px" width="11" height="26"><path d="M5.5 4.5L7.8 8.5H3.2zM5.5 20.5L7.8 16.5H3.2z" fill="#b8b6b8" stroke="#5a585a" stroke-width=".8"/></svg><div class="a" style="left:124px;top:544px;width:54px;height:24px;box-sizing:border-box;background:#fff;border:3px solid;border-top-width:4px;border-color:#8a888a #c6c4c6 #c6c4c6 #8a888a;box-shadow:inset 1px 1px 0 #b0aeb0"></div><div class="a" style="left:113px;top:543px;width:11px;height:25px;box-sizing:border-box;border-radius:5.5px;background:linear-gradient(100deg,#d6d4d6 0,#cccacc 50%,#a6a4a6 100%);box-shadow:inset 0 0 1px 0 #8a888a"></div><div class="a" style="left:114px;top:555px;width:9px;height:1px;background:#a09ea0"></div><svg class="a" style="left:113px;top:543px" width="11" height="26"><path d="M5.5 4.5L7.8 8.5H3.2zM5.5 20.5L7.8 16.5H3.2z" fill="#b8b6b8" stroke="#5a585a" stroke-width=".8"/></svg>
<div class="t" style="left:120.50px;top:30.00px;font-size:12px;letter-spacing:-0.288px;">AutoScale Y</div>
<div class="t" style="left:282.64px;top:37.00px;font-size:12px;letter-spacing:-0.201px;color:#fff;">Fit Center = 12.373 µm</div>
<div class="t" style="left:36.71px;top:350.00px;font-size:12px;letter-spacing:-0.005px;">Tracking ON</div>
<div class="t" style="left:32.06px;top:370.00px;font-size:12px;letter-spacing:0.106px;">TrFollow ON</div>
<div class="t" style="left:169.00px;top:346.50px;font-size:12px;letter-spacing:-0.294px;">spStatus</div>
<div class="t" style="left:129.54px;top:368.00px;font-size:12px;letter-spacing:-0.480px;">Ready</div>
<div class="t" style="left:286.80px;top:369.00px;font-size:12px;letter-spacing:-0.320px;">UC TCP error</div>
<div class="t" style="left:334.52px;top:342.00px;font-size:12px;letter-spacing:-0.329px;">centerWL [Ch130.5]</div>
<div class="t" style="left:450.40px;top:342.00px;font-size:12px;letter-spacing:-0.428px;">12.368</div>
<div class="t" style="left:491.72px;top:342.00px;font-size:12px;letter-spacing:0.900px;">µm</div>
<div class="t" style="left:549.80px;top:339.50px;font-size:12px;letter-spacing:-0.108px;">Cur 0 Ch X-µm</div>
<div class="t" style="left:649.76px;top:339.50px;font-size:12px;letter-spacing:0.060px;">Y-GF</div>
<div class="t" style="left:692.76px;top:339.50px;font-size:12px;letter-spacing:0.307px;">Y-MS</div>
<div class="t" style="left:735.76px;top:339.50px;font-size:12px;letter-spacing:0.550px;">Y-Tr%</div>
<div class="t" style="left:568.10px;top:360.00px;font-size:12px;letter-spacing:-0.440px;">142</div>
<div class="t" style="left:600.30px;top:360.00px;font-size:12px;letter-spacing:-0.496px;">12.381</div>
<div class="t" style="left:652.72px;top:360.00px;font-size:12px;letter-spacing:-0.545px;">58942</div>
<div class="t" style="left:700.02px;top:360.00px;font-size:12px;letter-spacing:-0.470px;">57322</div>
<div class="t" style="left:739.10px;top:360.00px;font-size:12px;letter-spacing:-0.275px;">100.4</div>
<div class="t" style="left:797.22px;top:349.50px;font-size:12px;letter-spacing:-0.185px;">pyroError</div>
<div class="t" style="left:848.44px;top:345.00px;font-size:12px;letter-spacing:-0.352px;">Errors</div>
<div class="t" style="left:691.26px;top:396.00px;font-size:12px;letter-spacing:0.236px;">TrCorrMult</div>
<div class="t" style="left:786.80px;top:396.00px;font-size:12px;letter-spacing:-0.595px;">1.000</div>
<div class="t" style="left:834.66px;top:396.00px;font-size:12px;letter-spacing:-0.336px;">TrCorrMS/GF</div>
<div class="t" style="left:13.04px;top:404.50px;font-size:12px;letter-spacing:-0.245px;">Basic</div>
<div class="t" style="left:60.16px;top:404.50px;font-size:12px;letter-spacing:0.117px;">SAcontr</div>
<div class="t" style="left:122.96px;top:404.50px;font-size:12px;letter-spacing:-0.073px;">SAtracking</div>
<div class="t" style="left:197.54px;top:402.70px;font-size:12px;letter-spacing:0.127px;">Pyro</div>
<div class="t" style="left:243.80px;top:404.50px;font-size:12px;letter-spacing:0.196px;">Connection</div>
<div class="t" style="left:28.24px;top:449.20px;font-size:12px;letter-spacing:0.440px;">DPM</div>
<div class="t" style="left:60.46px;top:467.30px;font-size:12px;letter-spacing:-0.960px;">40</div>
<div class="t" style="left:139.44px;top:467.00px;font-size:12px;letter-spacing:-0.618px;">FixCh OFF</div>
<div class="t" style="left:284.80px;top:466.60px;font-size:12px;letter-spacing:-0.362px;">256 samples</div>
<div class="t" style="left:124.34px;top:493.20px;font-size:12px;letter-spacing:-0.360px;">Fix Index</div>
<div class="t" style="left:124.34px;top:528.80px;font-size:12px;letter-spacing:-0.250px;">Fix Value</div>
<div class="t" style="left:129.52px;top:513.30px;font-size:12px;letter-spacing:0.000px;">0</div>
<div class="t" style="left:129.40px;top:549.50px;font-size:12px;letter-spacing:-0.893px;">2000</div>
</body></html>
